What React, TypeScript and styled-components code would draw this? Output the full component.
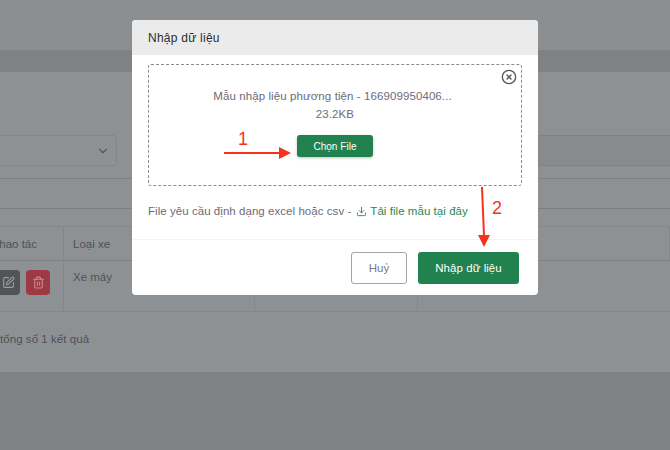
import React from "react";
import styled, { createGlobalStyle } from "styled-components";
import { ChevronDown, CircleX, Download, SquarePen, Trash2 } from "lucide-react";

const GlobalStyle = createGlobalStyle`
    html, body {
        margin: 0;
        padding: 0;
        height: 100%;
        overflow: hidden;
        background: #7f8385;
        font-family: "Liberation Sans", Arial, sans-serif;
    }
`;

const Page = styled.div`
    width: 670px;
    height: 450px;
    position: relative;
    overflow: hidden;
    background: #7f8385;
`;

const TopBar = styled.div`
    height: 50px;
    background: #8c8f91;
`;

const Band = styled.div`
    height: 22px;
    background: #7e8284;
`;

const Card = styled.div`
    height: 300px;
    box-sizing: border-box;
    padding-top: 63px;
    background: #8e9193;
`;

const Filters = styled.div`
    display: grid;
    grid-template-columns: 117px 1fr;
    column-gap: 40px;
    height: 31px;
`;

const Select = styled.div<{ $filled?: boolean }>`
    box-sizing: border-box;
    display: flex;
    align-items: center;
    justify-content: flex-end;
    padding-right: 6px;
    color: #55595c;
    border: 1px solid ${(p) => (p.$filled ? "#7f8284" : "#84878a")};
    border-left: ${(p) => (p.$filled ? "1px solid #7f8284" : "0")};
    border-right: ${(p) => (p.$filled ? "0" : "1px solid #84878a")};
    border-radius: ${(p) => (p.$filled ? "0" : "0 4px 4px 0")};
    background: ${(p) => (p.$filled ? "#888b8d" : "#8e9193")};
`;

const TabRow = styled.div`
    box-sizing: border-box;
    height: 31px;
    margin-top: 12px;
    border-top: 1px solid #7f8284;
    border-bottom: 1px solid #7c7f82;
`;

const Table = styled.div`
    margin-top: 17px;
    display: grid;
    grid-template-columns: 64px 191px 163px 1fr;
    grid-template-rows: 34px 51px;
    border-top: 1px solid #85888a;
    color: #4f5255;
    font-size: 11.5px;
`;

const HeadCell = styled.div`
    box-sizing: border-box;
    padding: 11px 0 0 9px;
    border-right: 1px solid #84878a;
    border-bottom: 1px solid #807f84;
    white-space: nowrap;
    &:last-child {
        border-right: 0;
    }
`;

const ActionHead = styled(HeadCell)`
    padding: 11px 26px 0 0;
    display: flex;
    justify-content: flex-end;
    overflow: hidden;
`;

const BodyCell = styled.div`
    box-sizing: border-box;
    padding: 10px 0 0 9px;
    border-right: 1px solid #84878a;
    border-bottom: 1px solid #84878a;
    &:last-child {
        border-right: 0;
    }
`;

const ActionCell = styled(BodyCell)`
    padding: 9px 13px 0 0;
    display: flex;
    justify-content: flex-end;
    gap: 6px;
`;

const IconButton = styled.div<{ $bg: string; $fg: string }>`
    flex: none;
    width: 24px;
    height: 25px;
    border-radius: 4px;
    display: flex;
    align-items: center;
    justify-content: center;
    background: ${(p) => p.$bg};
    color: ${(p) => p.$fg};
`;

const TotalText = styled.div`
    margin-top: 20px;
    color: #4f5255;
    font-size: 11.5px;
    letter-spacing: 0.05px;
    line-height: 15px;
`;

const Modal = styled.div`
    position: absolute;
    top: 20px;
    left: 132px;
    width: 406px;
    height: 275px;
    display: flex;
    flex-direction: column;
    background: #fff;
    border-radius: 4px;
    overflow: hidden;
`;

const ModalHeader = styled.div`
    height: 35px;
    flex: none;
    display: flex;
    align-items: center;
    padding-left: 16px;
    background: #ebebeb;
    color: #2b2b30;
    font-size: 12px;
    letter-spacing: 0.25px;
`;

const ModalBody = styled.div`
    flex: 1;
    padding: 9px 16px 0;
    border-bottom: 1px solid #f3f3f3;
`;

const DropZone = styled.div`
    position: relative;
    box-sizing: border-box;
    height: 122px;
    padding-top: 22px;
    display: flex;
    flex-direction: column;
    align-items: center;
    border: 1px dashed #8b8b8b;
    border-radius: 3px;
    color: #6c6c78;
    font-size: 11.5px;
    letter-spacing: 0.09px;
`;

const FileLine = styled.div`
    line-height: 18px;
`;

const FileName = styled(FileLine)`
    padding-right: 5px;
`;

const ClearIcon = styled.div`
    position: absolute;
    top: 4px;
    right: 4px;
    display: flex;
    color: #55555e;
`;

const PickButton = styled.div`
    margin-top: 12px;
    width: 76px;
    height: 22px;
    display: flex;
    align-items: center;
    justify-content: center;
    border-radius: 3px;
    background: #22824f;
    box-shadow: 0 1px 3px rgba(0, 0, 0, 0.25);
    color: #fff;
    font-size: 10px;
    letter-spacing: 0.05px;
`;

const Hint = styled.div`
    margin-top: 17px;
    display: flex;
    align-items: center;
    height: 16px;
    color: #6c6c78;
    font-size: 11.5px;
    letter-spacing: 0.05px;
`;

const SampleLink = styled.span`
    display: inline-flex;
    align-items: center;
    gap: 3px;
    margin-left: 5px;
    color: #2a8657;
`;

const ModalFooter = styled.div`
    height: 55px;
    flex: none;
    box-sizing: border-box;
    padding: 12px 19px 0 0;
    display: flex;
    justify-content: flex-end;
    gap: 11px;
`;

const FooterButton = styled.div<{ $primary?: boolean }>`
    box-sizing: border-box;
    height: 32px;
    width: ${(p) => (p.$primary ? "101px" : "56px")};
    display: flex;
    align-items: center;
    justify-content: center;
    border-radius: 3px;
    font-size: 11.5px;
    letter-spacing: 0.06px;
    background: ${(p) => (p.$primary ? "#22824f" : "#fff")};
    color: ${(p) => (p.$primary ? "#fff" : "#77777f")};
    border: ${(p) => (p.$primary ? "0" : "1px solid #a5a5a8")};
`;

const Marks = styled.svg`
    position: absolute;
    top: 0;
    left: 0;
    pointer-events: none;
`;

const MarkLabel = styled.span<{ $x: number; $y: number }>`
    position: absolute;
    left: ${(p) => p.$x}px;
    top: ${(p) => p.$y}px;
    color: #f5321c;
    font-family: "Liberation Sans", sans-serif;
    font-size: 18px;
    line-height: 20px;
`;

const App: React.FC = () => {
    return (
        <Page>
            <GlobalStyle />
            <TopBar />
            <Band />
            <Card>
                <Filters>
                    <Select>
                        <ChevronDown size={14} />
                    </Select>
                    <Select $filled />
                </Filters>
                <TabRow />
                <Table>
                    <ActionHead>Thao tác</ActionHead>
                    <HeadCell>Loại xe</HeadCell>
                    <HeadCell />
                    <HeadCell />
                    <ActionCell>
                        <IconButton $bg="#505457" $fg="#9a9d9f">
                            <SquarePen size={13} />
                        </IconButton>
                        <IconButton $bg="#9d3a44" $fg="#c98a90">
                            <Trash2 size={13} />
                        </IconButton>
                    </ActionCell>
                    <BodyCell>Xe máy</BodyCell>
                    <BodyCell />
                    <BodyCell />
                </Table>
                <TotalText>tổng số 1 kết quả</TotalText>
            </Card>

            <Modal>
                <ModalHeader>Nhập dữ liệu</ModalHeader>
                <ModalBody>
                    <DropZone>
                        <ClearIcon>
                            <CircleX size={16} />
                        </ClearIcon>
                        <FileName>Mẫu nhập liệu phương tiện - 166909950406...</FileName>
                        <FileLine>23.2KB</FileLine>
                        <PickButton>Chọn File</PickButton>
                    </DropZone>
                    <Hint>
                        File yêu cầu định dạng excel hoặc csv -
                        <SampleLink>
                            <Download size={11} />
                            Tải file mẫu tại đây
                        </SampleLink>
                    </Hint>
                </ModalBody>
                <ModalFooter>
                    <FooterButton>Huỷ</FooterButton>
                    <FooterButton $primary>Nhập dữ liệu</FooterButton>
                </ModalFooter>
            </Modal>

            <Marks width={670} height={450} viewBox="0 0 670 450">
                <path d="M224 153H280" stroke="#f5321c" strokeWidth={2} fill="none" />
                <path d="M279 147L291 153L279 159Z" fill="#f5321c" />
                <path d="M482 187L484 236" stroke="#f5321c" strokeWidth={2} fill="none" />
                <path d="M478 235H490L484 247Z" fill="#f5321c" />
            </Marks>
            <MarkLabel $x={238} $y={129}>1</MarkLabel>
            <MarkLabel $x={492} $y={198}>2</MarkLabel>
        </Page>
    );
};

export default App;
